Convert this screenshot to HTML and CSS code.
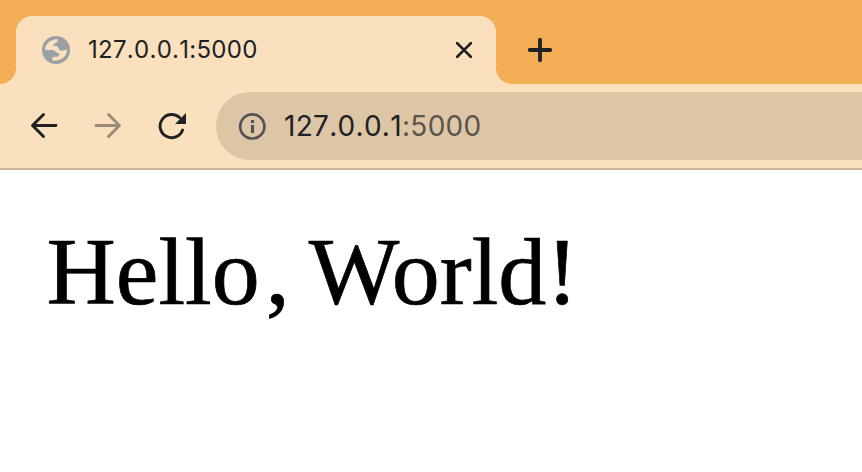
FILE: index.html
```html
<!DOCTYPE html>
<html lang="en">
<head>
<meta charset="utf-8">
<title>127.0.0.1:5000</title>
<link rel="stylesheet" href="styles.css">
</head>
<body>
<header class="browser">
  <div class="tabs">
    <div class="gutter"></div>
    <div class="tab">
      <svg class="globe" viewBox="0 0 28 28"><circle cx="14" cy="14" r="14" fill="#9aa0a6"/><path fill="#fae0bc" d="M3 14C3 8 8.5 3 15.5 3C16.2 4.8 15.5 6.6 13.8 6.9C11.8 7.2 11.5 8 11.5 10.2C12.8 10.2 15.6 9.4 16.2 11.2C16.7 13.8 18.2 15 20 14.8C22 14.5 22.7 13.4 25 13.8C25 20.4 19.2 25.5 10.4 24.6V21.3C13 20.8 16.7 21 17.2 18.8C17.6 16.6 15.5 16.8 14.1 15.9C12.7 14.8 12.5 14 10.5 14Z"/></svg>
      <span class="tab-title">127.0.0.1:5000</span>
      <svg class="close" viewBox="0 0 16 16"><path d="M1 1L15 15M15 1L1 15"/></svg>
    </div>
    <div class="rest">
      <svg class="plus" viewBox="0 0 24 24"><path d="M12 1.8V22.2M1.8 12H22.2"/></svg>
    </div>
  </div>
  <nav class="toolbar">
    <svg class="nav" viewBox="0 0 28 28"><path d="M26 13.5H3M13.5 2.5L2.5 13.5L13.5 24.5"/></svg>
    <svg class="nav forward" viewBox="0 0 28 28"><path d="M2 13.5H25M14.5 2.5L25.5 13.5L14.5 24.5"/></svg>
    <svg class="nav" viewBox="0 0 28 28"><path d="M24.6 18A11.6 11.6 0 1 1 21.8 5.8"/><path class="tip" d="M28 1V12H17Z"/></svg>
    <div class="address">
      <svg class="info" viewBox="0 0 28 28"><circle cx="14.3" cy="14.4" r="12.1"/><path d="M14.5 13V21M14.5 8V11"/></svg>
      <span class="url">127.0.0.1<span class="port">:5000</span></span>
    </div>
  </nav>
</header>
<main class="page">Hell<span class="loose">o</span>,<span class="tight"> </span>World!</main>
</body>
</html>
```
FILE: styles.css
```css
* { box-sizing: border-box; }
body { margin: 0; background: #fff; overflow: hidden; }
svg { display: block; flex: none; fill: none; stroke-linecap: round; }
.browser { height: 170px; background: #fae0bc; border-bottom: 2px solid #c8b396; font-family: Inter, "Liberation Sans", sans-serif; font-kerning: none; font-feature-settings: "calt" 0; color: #202124; }
.tabs { display: flex; height: 84px; background: linear-gradient(#f4ae56 0 68px, #fae0bc 68px); }
.gutter { width: 16px; background: #f4ae56; border-bottom-right-radius: 16px; }
.tab { display: flex; align-items: center; width: 480px; height: 68px; margin-top: 16px; padding: 0 24px 0 26px; border-radius: 16px 16px 0 0; background: #fae0bc; }
.globe { width: 28px; height: 28px; }
.tab-title { margin-left: 18px; flex: 1; font-size: 24px; line-height: 32px; letter-spacing: 0.28px; white-space: nowrap; }
.close { width: 16px; height: 16px; stroke: #202124; stroke-width: 2.6; }
.rest { flex: 1; padding: 38px 0 0 32px; background: #f4ae56; border-bottom-left-radius: 16px; }
.plus { width: 24px; height: 24px; stroke: #202124; stroke-width: 3.8; }
.toolbar { display: flex; align-items: center; gap: 36px; height: 84px; padding-left: 30px; }
.nav { width: 28px; height: 28px; stroke: #202124; stroke-width: 2.9; stroke-linejoin: round; }
.forward { stroke: #9a8b78; }
.tip { fill: #202124; stroke: none; }
.address { display: flex; align-items: center; flex: 1; height: 68px; margin-left: -6px; padding-left: 22px; border-radius: 34px 0 0 34px; background: #ddc6a6; }
.info { width: 28px; height: 28px; stroke: #515358; stroke-width: 2.7; stroke-linecap: butt; }
.info path { stroke-width: 3.1; }
.url { margin-left: 18px; font-size: 28px; line-height: 36px; letter-spacing: 0.3px; white-space: nowrap; }
.port { color: #5b544c; }
.page { padding: 47px 46.5px; font: 96px/110px "Liberation Serif", "Times New Roman", serif; color: #000; -webkit-text-stroke: 0.7px #000; white-space: nowrap; }
.loose { letter-spacing: 6px; }
.tight { letter-spacing: -5px; }
```
